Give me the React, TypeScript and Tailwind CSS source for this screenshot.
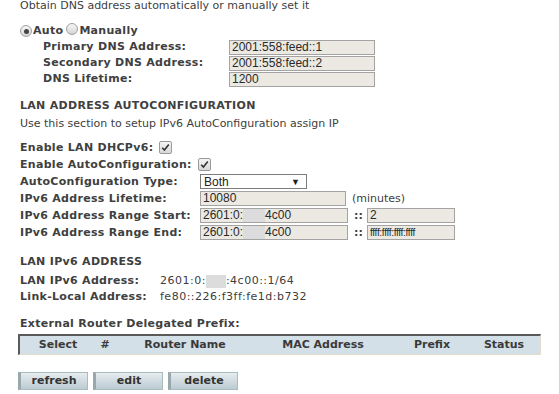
import React from "react";

const Box = ({ w, children }: { w: string; children: React.ReactNode }) => (
  <div
    className={`${w} h-[15px] border border-[#a3a3a3] bg-[#ebe9e2] pl-[2px] flex items-center text-[12px] leading-[13px] text-[#2a2a2a] font-['Liberation_Sans',Arial,sans-serif] whitespace-nowrap overflow-hidden`}
  >
    {children}
  </div>
);

const Blur = ({ w }: { w: string }) => (
  <span className={`inline-block ${w} h-[13px] bg-[#dcdcdc]`} />
);

const Check = () => (
  <span className="inline-flex w-[13px] h-[13px] border border-[#9a9a9a] rounded-[2px] bg-gradient-to-b from-[#f4f4f4] to-[#d8d8d8] items-center justify-center ml-[6px]">
    <svg width="9" height="9" viewBox="0 0 9 9">
      <path d="M1.2 4.8 L3.4 7 L7.8 1.6" stroke="#333" strokeWidth="1.6" fill="none" />
    </svg>
  </span>
);

const Radio = ({ on }: { on?: boolean }) => (
  <span className="inline-flex w-[12px] h-[12px] rounded-full border border-[#a0a0a0] bg-gradient-to-b from-[#f6f6f6] to-[#d6d6d6] items-center justify-center">
    {on && <span className="w-[5px] h-[5px] rounded-full bg-[#444]" />}
  </span>
);

const Btn = ({ label }: { label: string }) => (
  <div className="w-[70px] h-[18px] border border-[#a8bcc0] border-l-[3px] border-l-[#9aa8ae] bg-gradient-to-b from-[#e6ecef] to-[#bccbd2] flex items-center justify-center font-bold text-[11px] text-[#333]">
    {label}
  </div>
);

export default function App() {
  return (
    <div className="w-[559px] h-[394px] overflow-hidden bg-white text-[#404040] text-[11px] leading-[14px] font-['DejaVu_Sans',Verdana,sans-serif]">
      <div className="mt-[-1px] pl-[18px]">
        <div className="pl-[2px] h-[14px]">Obtain DNS address automatically or manually set it</div>

        <div className="pl-[2px] mt-[11px] h-[14px] flex items-center font-bold tracking-[0.3px]">
          <Radio on />
          <span className="ml-[1px]">Auto</span>
          <span className="ml-[3px]"><Radio /></span>
          <span className="ml-[1px]">Manually</span>
        </div>

        <div className="mt-[1px]">
          {[
            ["Primary DNS Address:", "2001:558:feed::1"],
            ["Secondary DNS Address:", "2001:558:feed::2"],
            ["DNS Lifetime:", "1200"],
          ].map(([l, v]) => (
            <div key={l} className="h-[16px] flex items-center">
              <div className="w-[211px] pl-[25px] font-bold tracking-[0.3px]">{l}</div>
              <Box w="w-[146px]">{v}</Box>
            </div>
          ))}
        </div>

        <div className="pl-[2px] mt-[12px] h-[14px] font-bold tracking-[0.3px]">LAN ADDRESS AUTOCONFIGURATION</div>
        <div className="pl-[2px] mt-[4px] h-[14px]">Use this section to setup IPv6 AutoConfiguration assign IP</div>

        <div className="mt-[8px] pl-[2px]">
          <div className="h-[17px] flex items-center font-bold tracking-[0.3px]">
            Enable LAN DHCPv6:<Check />
          </div>
          <div className="h-[17px] flex items-center font-bold tracking-[0.3px]">
            Enable AutoConfiguration:<Check />
          </div>
          <div className="h-[17px] flex items-center">
            <div className="w-[180px] font-bold tracking-[0.3px]">AutoConfiguration Type:</div>
            <div className="w-[107px] h-[15px] border border-[#7c7c7c] bg-white flex items-center justify-between pl-[3px] pr-[6px] text-[12px] text-[#222] font-['Liberation_Sans',Arial,sans-serif]">
              <span>Both</span>
              <span className="text-[9px]">▼</span>
            </div>
          </div>
          <div className="h-[17px] flex items-center">
            <div className="w-[180px] font-bold tracking-[0.3px]">IPv6 Address Lifetime:</div>
            <Box w="w-[146px]">10080</Box>
            <span className="ml-[6px]">(minutes)</span>
          </div>
          {["IPv6 Address Range Start:", "IPv6 Address Range End:"].map((l, i) => (
            <div key={l} className="h-[17px] flex items-center">
              <div className="w-[180px] font-bold tracking-[0.3px]">{l}</div>
              <Box w="w-[148px]">
                2601:0:<Blur w="w-[22px]" />4c00
              </Box>
              <span className="ml-[6px] w-[13px] font-bold">::</span>
              <Box w="w-[88px]">
                {i === 0 ? "2" : <span className="text-[10px] tracking-[-0.3px]">ffff:ffff:ffff:ffff</span>}
              </Box>
            </div>
          ))}
        </div>

        <div className="pl-[2px] mt-[14px] h-[14px] font-bold tracking-[0.3px]">LAN IPv6 ADDRESS</div>
        <div className="pl-[2px] mt-[4px]">
          <div className="h-[16px] flex items-center">
            <div className="w-[140px] font-bold tracking-[0.3px]">LAN IPv6 Address:</div>
            <span className="tracking-[0.5px]">2601:0:</span>
            <Blur w="w-[20px]" />
            <span className="tracking-[0.5px]">:4c00::1/64</span>
          </div>
          <div className="h-[16px] flex items-center">
            <div className="w-[140px] font-bold tracking-[0.3px]">Link-Local Address:</div>
            <span className="tracking-[0.5px]">fe80::226:f3ff:fe1d:b732</span>
          </div>
        </div>

        <div className="pl-[2px] mt-[12px] h-[14px] font-bold tracking-[0.3px]">External Router Delegated Prefix:</div>
        <div className="mt-[3px] w-[523px] h-[21px] bg-[#d4e0e7] border-t-2 border-l-2 border-t-[#5a5a5a] border-l-[#5a5a5a] border-r border-b border-r-[#e2dccd] border-b-[#e2dccd] flex items-center font-bold text-[#3a3a3a]">
          <div className="w-[76px] text-center">Select</div>
          <div className="w-[18px] text-center">#</div>
          <div className="w-[142px] text-center">Router Name</div>
          <div className="w-[134px] text-center">MAC Address</div>
          <div className="w-[84px] text-center">Prefix</div>
          <div className="w-[60px] text-center">Status</div>
        </div>

        <div className="mt-[17px] flex gap-[5px]">
          <Btn label="refresh" />
          <Btn label="edit" />
          <Btn label="delete" />
        </div>
      </div>
    </div>
  );
}
